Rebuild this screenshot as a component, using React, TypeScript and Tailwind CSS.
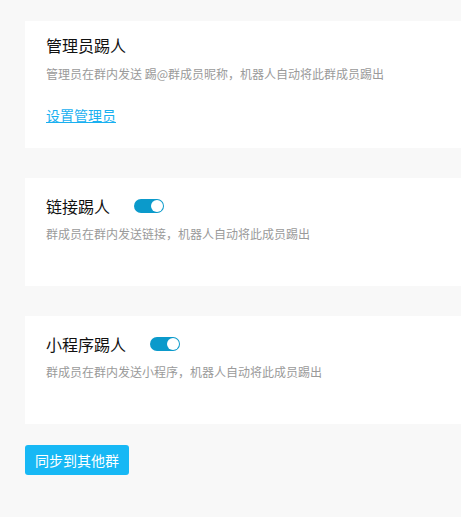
import React, { useState } from 'react';

const FONT = "font-['Microsoft_YaHei','Noto_Sans_CJK_SC',sans-serif]";

function Toggle({ on, onChange }: { on: boolean; onChange: () => void }) {
  return (
    <button
      onClick={onChange}
      className={`relative h-[14px] w-[30px] rounded-full ${on ? 'bg-[#0b9acb]' : 'bg-[#c8c8c8]'}`}
    >
      <span
        className={`absolute top-[1px] h-[12px] w-[12px] rounded-full bg-white ${on ? 'right-[1px]' : 'left-[1px]'}`}
      />
    </button>
  );
}

function RuleCard({
  title,
  desc,
  on,
  onToggle,
}: {
  title: string;
  desc: string;
  on: boolean;
  onToggle: () => void;
}) {
  return (
    <section className="bg-white pl-[21px] pt-[16px] pb-[43px]">
      <div className="flex items-center gap-[24px]">
        <h2 className="text-[16px] leading-[24px] text-[#111]">{title}</h2>
        <Toggle on={on} onChange={onToggle} />
      </div>
      <p className="mt-[7px] text-[12px] leading-[18px] text-[#9a9a9a]">{desc}</p>
    </section>
  );
}

export default function App() {
  const [linkKick, setLinkKick] = useState(true);
  const [appKick, setAppKick] = useState(true);

  return (
    <div className={`${FONT} min-h-[517px] bg-[#f8f8f8] pl-[25px] pt-[21px]`}>
      <div className="flex flex-col gap-[30px]">
        {/* 管理员踢人 */}
        <section className="bg-white pl-[21px] pt-[12px] pb-[23px]">
          <h2 className="text-[16px] leading-[24px] text-[#111]">管理员踢人</h2>
          <p className="mt-[8px] text-[12px] leading-[18px] text-[#9a9a9a]">
            管理员在群内发送 踢@群成员昵称，机器人自动将此群成员踢出
          </p>
          <a href="#" className="mt-[22px] block w-fit text-[14px] leading-[20px] text-[#19b0f0] underline">
            设置管理员
          </a>
        </section>

        <RuleCard
          title="链接踢人"
          desc="群成员在群内发送链接，机器人自动将此成员踢出"
          on={linkKick}
          onToggle={() => setLinkKick(!linkKick)}
        />
        <RuleCard
          title="小程序踢人"
          desc="群成员在群内发送小程序，机器人自动将此成员踢出"
          on={appKick}
          onToggle={() => setAppKick(!appKick)}
        />
      </div>

      <button className="mt-[21px] h-[30px] rounded-[3px] bg-[#17b8f5] px-[10px] text-[14px] text-white">
        同步到其他群
      </button>
    </div>
  );
}
